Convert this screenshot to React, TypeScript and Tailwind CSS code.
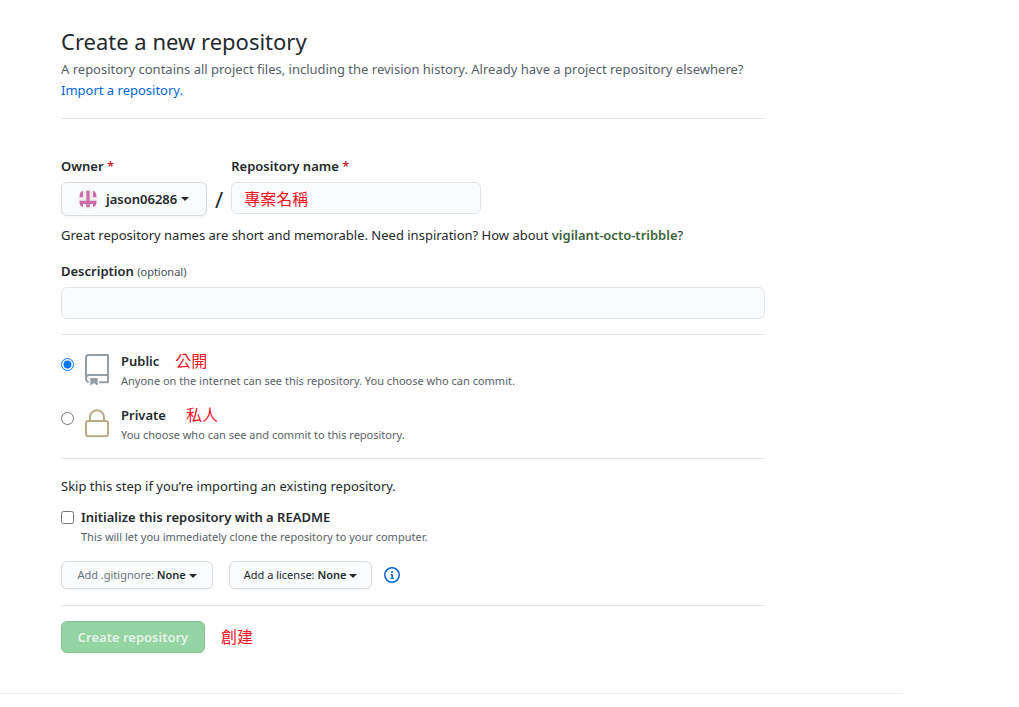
import { useState, type ReactNode } from "react";

const Divider = () => <hr className="border-t border-[#e1e4e8]" />;

const Note = ({ children }: { children: ReactNode }) => (
  <span className="text-base leading-6 text-[#f0141e]">{children}</span>
);

const Caret = () => (
  <span className="inline-block border-x-4 border-t-4 border-x-transparent border-t-current align-middle"></span>
);

const RepoIcon = () => (
  <svg className="h-8 w-8 shrink-0" viewBox="0 0 24 24" fill="#959da5" aria-hidden="true">
    <path
      fillRule="evenodd"
      d="M3 2.75A2.75 2.75 0 015.75 0h14.5a.75.75 0 01.75.75v20.5a.75.75 0 01-.75.75h-6a.75.75 0 010-1.5h5.25v-4H6A1.5 1.5 0 004.5 18v.75c0 .716.43 1.334 1.05 1.605a.75.75 0 01-.6 1.374A3.25 3.25 0 013 18.75v-16zM19.5 1.5V15H6c-.546 0-1.059.146-1.5.401V2.75c0-.69.56-1.25 1.25-1.25H19.5z"
    />
    <path d="M7 18.25a.25.25 0 01.25-.25h5a.25.25 0 01.25.25v5.01a.25.25 0 01-.397.201l-2.206-1.604a.25.25 0 00-.294 0L7.397 23.46a.25.25 0 01-.397-.2v-5.01z" />
  </svg>
);

const LockIcon = () => (
  <svg className="h-8 w-8 shrink-0" viewBox="0 0 24 24" fill="#b9ab85" aria-hidden="true">
    <path
      fillRule="evenodd"
      d="M6 9V7.25C6 3.845 8.503 1 12 1s6 2.845 6 6.25V9h.5a2.5 2.5 0 012.5 2.5v8a2.5 2.5 0 01-2.5 2.5h-13A2.5 2.5 0 013 19.5v-8A2.5 2.5 0 015.5 9H6zm1.5-1.75C7.5 4.58 9.422 2.5 12 2.5c2.578 0 4.5 2.08 4.5 4.75V9h-9V7.25zm-3 4.25a1 1 0 011-1h13a1 1 0 011 1v8a1 1 0 01-1 1h-13a1 1 0 01-1-1v-8z"
    />
  </svg>
);

const InfoIcon = () => (
  <svg className="h-4 w-4" viewBox="0 0 16 16" fill="#0366d6" aria-hidden="true">
    <path
      fillRule="evenodd"
      d="M8 1.5a6.5 6.5 0 100 13 6.5 6.5 0 000-13zM0 8a8 8 0 1116 0A8 8 0 010 8zm6.5-.25A.75.75 0 017.25 7h1a.75.75 0 01.75.75v2.75h.25a.75.75 0 010 1.5h-2a.75.75 0 010-1.5h.25v-2h-.25a.75.75 0 01-.75-.75zM8 6a1 1 0 100-2 1 1 0 000 2z"
    />
  </svg>
);

const Identicon = () => (
  <svg className="h-5 w-5 rounded-full" viewBox="0 0 12 12" aria-hidden="true">
    <rect width="12" height="12" fill="#f0f0f0" />
    <path fill="#cd6ba8" d="M1 1h2v4H1zM5 1h2v6H5zM9 1h2v4H9zM1 7h10v2H1zM1 9h2v2H1zM5 9h2v2H5zM9 9h2v2H9z" />
  </svg>
);

const options = [
  {
    id: "public",
    title: "Public",
    note: "公開",
    gap: "gap-4",
    text: "Anyone on the internet can see this repository. You choose who can commit.",
    icon: <RepoIcon />,
  },
  {
    id: "private",
    title: "Private",
    note: "私人",
    gap: "gap-5",
    text: "You choose who can see and commit to this repository.",
    icon: <LockIcon />,
  },
];

export default function App() {
  const [name, setName] = useState("專案名稱");
  const [description, setDescription] = useState("");
  const [visibility, setVisibility] = useState("public");
  const [readme, setReadme] = useState(false);

  return (
    <div className="bg-white font-['Noto_Sans','Noto_Sans_CJK_TC',sans-serif] text-[13px] leading-5 text-[#24292e]">
      <main className="max-w-[903px] border-b border-[#eaecef] pt-[23px] pr-[138px] pb-10 pl-[61px]">
        <h1 className="text-[22px] leading-9">Create a new repository</h1>
        <p className="leading-[21px] text-[#586069]">
          A repository contains all project files, including the revision history. Already have a project repository elsewhere?
          <br />
          <a href="#import" className="text-[#0366d6]">Import a repository.</a>
        </p>

        <form className="mt-[17px]" onSubmit={(e) => e.preventDefault()}>
          <Divider />

          <div className="mt-[37px] flex gap-2">
            <div>
              <label htmlFor="owner" className="block font-semibold">
                Owner <span className="text-[#cb2431]">*</span>
              </label>
              <button
                id="owner"
                type="button"
                className="mt-1.5 flex h-[34px] w-[146px] items-center rounded-md border border-[#d8dbde] bg-[#fafbfc] pl-4 font-semibold shadow-xs"
              >
                <Identicon />
                <span className="mr-1 ml-2">jason06286</span>
                <Caret />
              </button>
            </div>
            <span className="mt-[25px] text-[22px] leading-9">/</span>
            <div>
              <label htmlFor="name" className="block font-semibold">
                Repository name <span className="text-[#cb2431]">*</span>
              </label>
              <input
                id="name"
                value={name}
                onChange={(e) => setName(e.target.value)}
                className="mt-1.5 h-8 w-[250px] rounded-md border border-[#e1e4e8] bg-[#fafbfc] px-3 text-base text-[#f0141e]"
              />
            </div>
          </div>

          <p className="mt-2">
            Great repository names are short and memorable. Need inspiration? How about{" "}
            <strong className="font-semibold text-[#3b6339]">vigilant-octo-tribble</strong>?
          </p>

          <label htmlFor="description" className="mt-4 block font-semibold">
            Description <span className="text-[11px] font-normal text-[#444d56]">(optional)</span>
          </label>
          <input
            id="description"
            value={description}
            onChange={(e) => setDescription(e.target.value)}
            className="mt-[5px] mb-[15px] block h-8 w-full rounded-md border border-[#e1e4e8] bg-[#fafbfc] px-3"
          />

          <Divider />

          <div className="flex flex-col gap-3 pt-4 pb-[11px]">
            {options.map((o) => (
              <div key={o.id} className="flex h-[42px] items-start">
                <input
                  type="radio"
                  id={o.id}
                  name="visibility"
                  checked={visibility === o.id}
                  onChange={() => setVisibility(o.id)}
                  className="mt-[7px] mr-[7px] h-[13px] w-[13px] shrink-0"
                />
                <div className="mt-[3px] mr-2">{o.icon}</div>
                <div>
                  <div className={`flex h-5 items-center ${o.gap}`}>
                    <label htmlFor={o.id} className="font-semibold">{o.title}</label>
                    <Note>{o.note}</Note>
                  </div>
                  <p className="text-[11px] text-[#586069]">{o.text}</p>
                </div>
              </div>
            ))}
          </div>

          <Divider />

          <p className="mt-[17px]">Skip this step if you’re importing an existing repository.</p>
          <div className="mt-[11px] flex items-start">
            <input
              type="checkbox"
              id="readme"
              checked={readme}
              onChange={(e) => setReadme(e.target.checked)}
              className="mt-1 mr-[7px] h-[13px] w-[13px] shrink-0"
            />
            <div>
              <label htmlFor="readme" className="block font-semibold">
                Initialize this repository with a README
              </label>
              <p className="text-[11px] text-[#586069]">
                This will let you immediately clone the repository to your computer.
              </p>
            </div>
          </div>

          <div className="mt-3.5 mb-4 flex items-center text-[11px]">
            <button
              type="button"
              className="mr-4 h-7 w-[152px] rounded-md border border-[#d8dbde] bg-[#fafbfc] shadow-xs"
            >
              <span className="text-[#6a737d]">Add .gitignore:</span> <span className="font-semibold">None</span> <Caret />
            </button>
            <button
              type="button"
              className="mr-3 h-7 w-[143px] rounded-md border border-[#d8dbde] bg-[#fafbfc] shadow-xs"
            >
              Add a license: <span className="font-semibold">None</span> <Caret />
            </button>
            <a href="#license-help" aria-label="About licenses" className="flex">
              <InfoIcon />
            </a>
          </div>

          <Divider />

          <div className="mt-[15px] flex items-center gap-4">
            <button
              type="submit"
              disabled
              className="h-8 w-36 rounded-md border border-[#86bf93] bg-[#94d3a2] font-semibold text-[#e4f4e8] shadow-xs"
            >
              Create repository
            </button>
            <Note>創建</Note>
          </div>
        </form>
      </main>
    </div>
  );
}
